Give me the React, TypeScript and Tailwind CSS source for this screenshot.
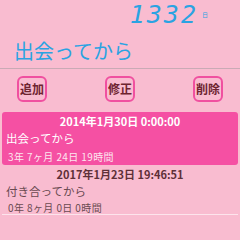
import React from "react";

const jp = { fontFamily: '"Noto Sans CJK JP", "Noto Sans", sans-serif' };

const records = [
  { date: "2014年1月30日 0:00:00", title: "出会ってから", span: "3年 7ヶ月 24日 19時間", active: true },
  { date: "2017年1月23日 19:46:51", title: "付き合ってから", span: "0年 8ヶ月 0日 0時間", active: false },
];

const ActionButton: React.FC<{ label: string }> = ({ label }) => (
  <button className="w-[30px] h-[26px] rounded-[6px] border-2 border-[#f050a0] text-[12px] font-bold text-[#6e2430] leading-none flex items-center justify-center">
    {label}
  </button>
);

export default function App() {
  return (
    <div className="w-[240px] h-[240px] bg-[#f9bcd0] overflow-hidden" style={jp}>
      <div className="h-[28px] flex items-start justify-end pr-[32px] pt-[2px]">
        <span
          className="text-[25px] leading-none text-[#2aa3e2] italic font-light tracking-[2px]"
          style={{ fontFamily: '"DejaVu Sans Mono", monospace' }}
        >
          1332
        </span>
        <span className="text-[6px] text-[#2aa3e2] ml-[4px] mt-[10px] leading-none">日</span>
      </div>
      <div className="h-[40px] pl-[14px] pt-[6px] flex items-center text-[20px] text-[#2aa3e2]">出会ってから</div>
      <div className="h-px bg-[#c9aab5]" />
      <div className="flex justify-between px-[17px] pt-[7px]">
        <ActionButton label="追加" />
        <ActionButton label="修正" />
        <ActionButton label="削除" />
      </div>
      <div className="px-[2px] pt-[10px]">
        {records.map((r) =>
          r.active ? (
            <div key={r.date} className="bg-[#f550a3] rounded-[3px] h-[53px] text-white">
              <div className="h-[18px] flex items-center justify-center text-[11px] font-bold">{r.date}</div>
              <div className="h-[18px] flex items-center pl-[4px] text-[11.5px]">{r.title}</div>
              <div className="h-[17px] flex items-center pl-[6px] text-[10px] tracking-[0.4px] text-[#fde6ef]">{r.span}</div>
            </div>
          ) : (
            <div key={r.date} className="h-[50px] border-b border-[#fde4ec] text-[#5e3038]">
              <div className="h-[18px] flex items-center justify-center text-[11px] font-bold">{r.date}</div>
              <div className="h-[18px] flex items-center pl-[4px] text-[11.5px] text-[#6a4a50]">{r.title}</div>
              <div className="h-[13px] flex items-center pl-[6px] text-[10px] tracking-[0.4px] text-[#6a4a50]">{r.span}</div>
            </div>
          )
        )}
      </div>
    </div>
  );
}
